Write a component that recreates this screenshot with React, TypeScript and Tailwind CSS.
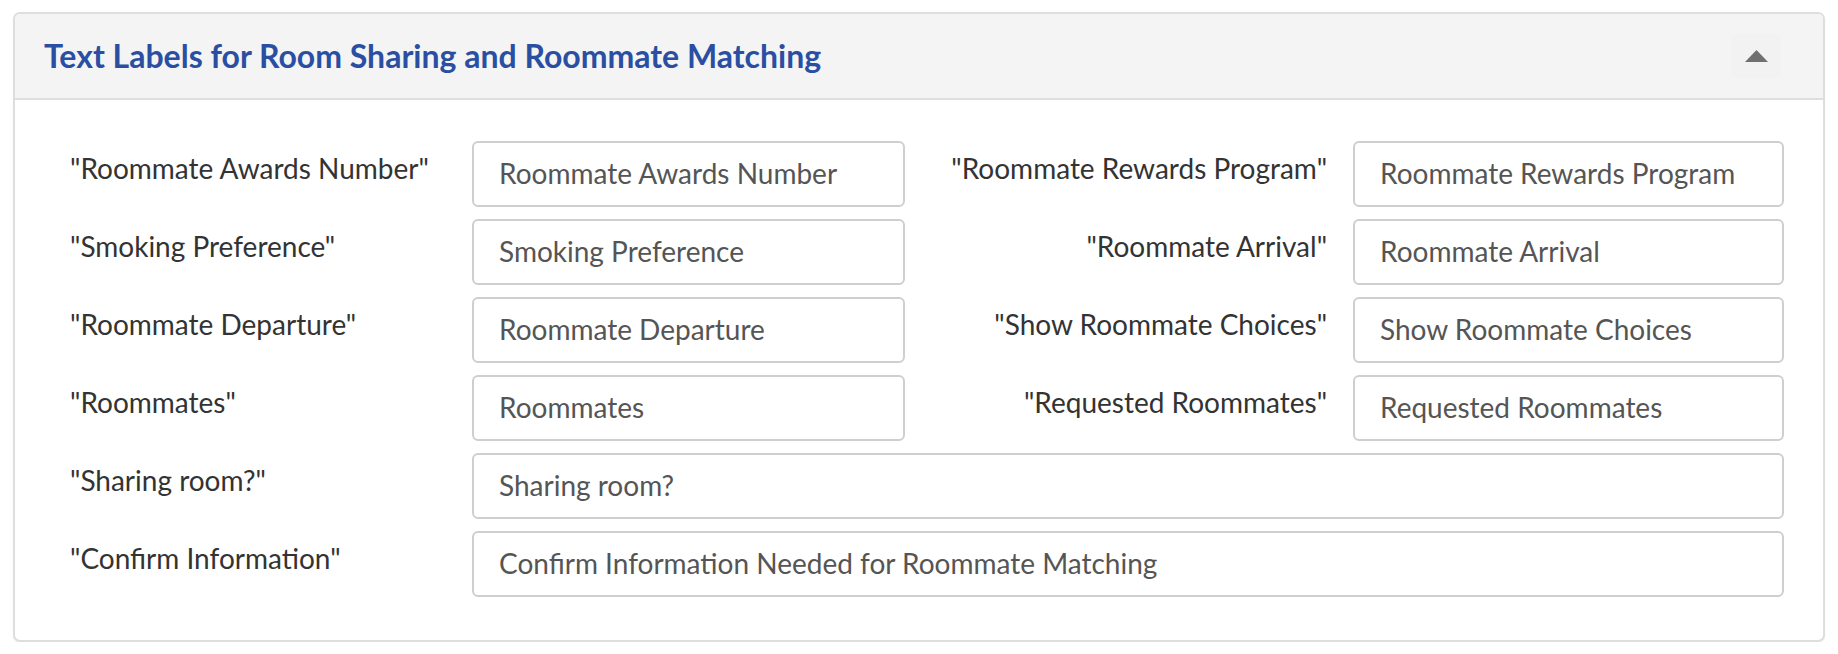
const pairs: [string, string][] = [
  ["Roommate Awards Number", "Roommate Rewards Program"],
  ["Smoking Preference", "Roommate Arrival"],
  ["Roommate Departure", "Show Roommate Choices"],
  ["Roommates", "Requested Roommates"],
];

const wide = [
  { label: "Sharing room?", value: "Sharing room?" },
  { label: "Confirm Information", value: "Confirm Information Needed for Roommate Matching" },
];

function Field({ value }: { value: string }) {
  return (
    <input
      type="text"
      defaultValue={value}
      className="h-[66px] w-full rounded-[6px] border-2 border-[#cfcfcf] bg-white px-[25px] pb-[3px] text-[28px] text-[#555] outline-none"
    />
  );
}

export default function App() {
  return (
    <div className="px-[13px] pt-[12px] font-['Lato',sans-serif]">
      <div className="overflow-hidden rounded-[7px] border-2 border-[#dedede] bg-white shadow-[0_1px_2px_rgba(0,0,0,0.06)]">
        {/* Header */}
        <div className="flex h-[86px] items-center justify-between border-b-2 border-[#dedede] bg-[#f4f4f4] pl-[29px] pr-[42px]">
          <h2 className="text-[32px] font-bold text-[#2a4fa2]">
            Text Labels for Room Sharing and Roommate Matching
          </h2>
          <button
            type="button"
            className="flex h-[44px] w-[50px] items-center justify-center rounded-[4px] bg-[#f2f2f2]"
          >
            <svg width="23" height="12" viewBox="0 0 23 12">
              <path d="M11.5 0 L23 12 L0 12 Z" fill="#707070" />
            </svg>
          </button>
        </div>

        {/* Body */}
        <div className="flex flex-col gap-[12px] pb-[43px] pl-[55px] pr-[39px] pt-[41px]">
          {pairs.map(([l, r]) => (
            <div key={l} className="grid grid-cols-[402px_433px_448px_431px]">
              <label className="pr-[26px] pt-[6px] text-[28px] text-[#333]">"{l}"</label>
              <Field value={l} />
              <label className="pr-[26px] pt-[6px] text-right text-[28px] text-[#333]">"{r}"</label>
              <Field value={r} />
            </div>
          ))}
          {wide.map((w) => (
            <div key={w.label} className="grid grid-cols-[402px_1fr]">
              <label className="pr-[26px] pt-[6px] text-[28px] text-[#333]">"{w.label}"</label>
              <Field value={w.value} />
            </div>
          ))}
        </div>
      </div>
    </div>
  );
}
